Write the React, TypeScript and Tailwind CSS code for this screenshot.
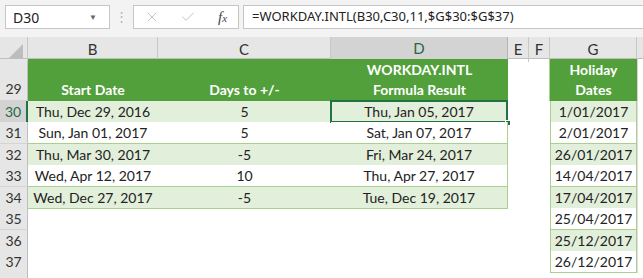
import { X, Check } from "lucide-react";

const cols = "grid grid-cols-[28px_130px_173px_177px_21px_21px_87px_1fr]";

const rows = [
  { n: "30", b: "Thu, Dec 29, 2016", c: "5", d: "Thu, Jan 05, 2017", g: "1/01/2017", h: "h-[21px]" },
  { n: "31", b: "Sun, Jan 01, 2017", c: "5", d: "Sat, Jan 07, 2017", g: "2/01/2017", h: "h-[22px]" },
  { n: "32", b: "Thu, Mar 30, 2017", c: "-5", d: "Fri, Mar 24, 2017", g: "26/01/2017", h: "h-[21px]" },
  { n: "33", b: "Wed, Apr 12, 2017", c: "10", d: "Thu, Apr 27, 2017", g: "14/04/2017", h: "h-[22px]" },
  { n: "34", b: "Wed, Dec 27, 2017", c: "-5", d: "Tue, Dec 19, 2017", g: "17/04/2017", h: "h-[21px]" },
  { n: "35", b: "", c: "", d: "", g: "25/04/2017", h: "h-[22px]" },
  { n: "36", b: "", c: "", d: "", g: "25/12/2017", h: "h-[21px]" },
  { n: "37", b: "", c: "", d: "", g: "26/12/2017", h: "h-[21px]" },
];

export default function App() {
  return (
    <div className="w-[643px] h-[278px] overflow-hidden bg-white text-[#222] font-['Lato',sans-serif]">
      {/* formula bar */}
      <div className="h-[37px] bg-[#f3f3f3] flex items-start pt-[5px] pl-[5px] font-['Noto_Sans',sans-serif]">
        <div className="w-[105px] h-[24px] bg-white border border-[#c6c6c6] flex items-center justify-between pl-[7px] pr-[12px] text-[14px] text-[#222]">
          <span>D30</span>
          <span className="text-[8px] text-[#666]">▼</span>
        </div>
        <div className="w-[23px] h-[24px] flex items-center justify-center text-[#b5b5b5] text-[13px]">⋮</div>
        <div className="w-[106px] h-[24px] bg-white border border-[#c6c6c6] flex items-center pl-[10px] gap-[20px] text-[#b9b9b9]">
          <X size={16} strokeWidth={1.3} />
          <Check size={16} strokeWidth={1.3} />
          <span className="ml-[2px] font-['Liberation_Serif',serif] italic text-[#444] text-[15px] leading-none">
            f<span className="text-[11px]">x</span>
          </span>
        </div>
        <div className="ml-[4px] flex-1 h-[24px] bg-white border border-[#c6c6c6] border-r-0 flex items-center pl-[8px] text-[13px] text-[#222]">
          =WORKDAY.INTL(B30,C30,11,$G$30:$G$37)
        </div>
      </div>

      {/* column headers */}
      <div className={`${cols} h-[22px] bg-[#e6e6e6] border-b border-[#bfbfbf] text-[15px] text-[#333]`}>
        <div className="border-r border-[#c8c8c8] relative">
          <div className="absolute right-[4px] bottom-[4px] w-0 h-0 border-l-[14px] border-l-transparent border-b-[14px] border-b-[#bdbdbd]" />
        </div>
        <div className="border-r border-[#c8c8c8] flex items-center justify-center">B</div>
        <div className="border-r border-[#c8c8c8] flex items-center justify-center">C</div>
        <div className="bg-[#d3d3d3] border-r border-[#b5b5b5] border-b-2 border-b-[#217346] flex items-center justify-center text-[#1e6b3f]">D</div>
        <div className="border-r border-[#c8c8c8] flex items-center justify-center">E</div>
        <div className="border-r border-[#c8c8c8] flex items-center justify-center">F</div>
        <div className="border-r border-[#c8c8c8] flex items-center justify-center">G</div>
        <div />
      </div>

      {/* header row 29 */}
      <div className={`${cols} h-[42px] text-[14px]`}>
        <div className="bg-[#e6e6e6] border-r border-[#bfbfbf] border-b border-b-[#d4d4d4] flex items-end justify-center pb-[1px] text-[#333]">29</div>
        <div className="bg-[#52a03c] text-white font-bold flex items-end justify-center pb-[1px]">Start Date</div>
        <div className="bg-[#52a03c] text-white font-bold flex items-end justify-center pb-[1px]">Days to +/-</div>
        <div className="bg-[#52a03c] text-white font-bold flex flex-col items-center justify-end leading-[20px] pb-[1px]">
          <span>WORKDAY.INTL</span>
          <span>Formula Result</span>
        </div>
        <div />
        <div className="border-r border-[#a9d08e]" />
        <div className="bg-[#52a03c] text-white font-bold flex flex-col items-center justify-end leading-[20px] pb-[1px]">
          <span>Holiday</span>
          <span>Dates</span>
        </div>
        <div className="border-l border-[#d4d4d4]" />
      </div>

      {/* data rows */}
      {rows.map((r, i) => {
        const inTable = i < 5;
        const fill = i % 2 === 0 ? "bg-[#e2efda]" : "bg-white";
        const sel = i === 0;
        const tableCell = inTable ? `${fill} border-b border-[#a9d08e]` : "";
        return (
          <div key={r.n} className={`${cols} ${r.h} text-[14px]`}>
            <div
              className={
                sel
                  ? "bg-[#d3d3d3] border-r-2 border-[#217346] border-b border-b-[#bdbdbd] flex items-center justify-center text-[#1e6b3f]"
                  : "bg-[#e6e6e6] border-r border-[#bfbfbf] border-b border-b-[#d4d4d4] flex items-center justify-center text-[#333]"
              }
            >
              {r.n}
            </div>
            <div className={`${tableCell} flex items-center justify-center`}>{r.b}</div>
            <div className={`${tableCell} flex items-center justify-center`}>{r.c}</div>
            <div className={`${tableCell} ${inTable ? "border-r border-r-[#a9d08e]" : ""} relative flex items-center justify-center`}>
              {sel && (
                <>
                  <div className="absolute inset-[-1px] border-2 border-[#217346]" />
                  <div className="absolute right-[-4px] bottom-[-4px] w-[6px] h-[6px] bg-[#217346] border border-white" />
                </>
              )}
              <span className="relative">{r.d}</span>
            </div>
            <div />
            <div />
            <div className={`${fill} border border-t-0 border-[#a9d08e] flex items-center justify-center`}>{r.g}</div>
            <div className="border-l border-[#e0e0e0]" />
          </div>
        );
      })}
      <div className={`${cols} h-[10px]`}>
        <div className="bg-[#e6e6e6] border-r border-[#bfbfbf]" />
      </div>
    </div>
  );
}
